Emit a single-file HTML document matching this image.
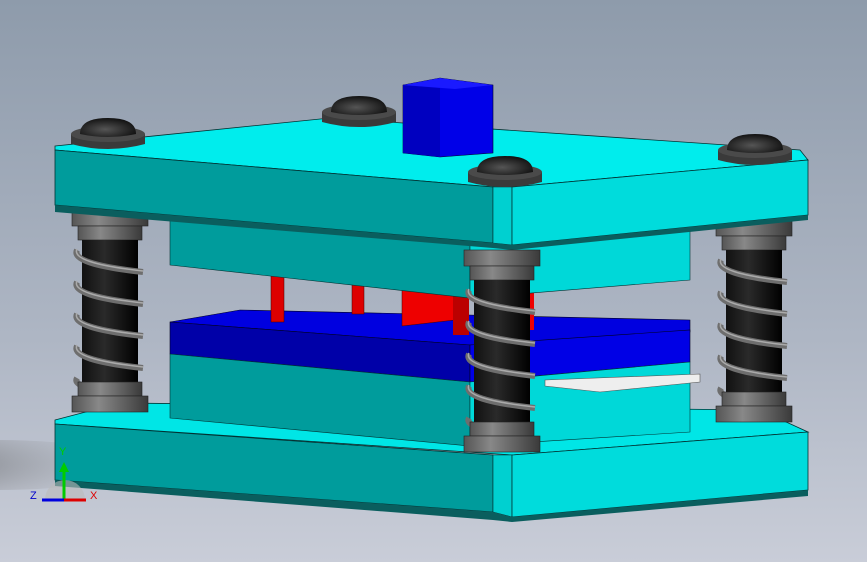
<!DOCTYPE html><html><head><style>body{margin:0;width:867px;height:562px;overflow:hidden;background:linear-gradient(#8e9bab,#aeb6c4 60%,#c9cdd8);}svg{display:block}</style></head><body>
<svg width="867" height="562" viewBox="0 0 867 562" xmlns="http://www.w3.org/2000/svg">
<defs>
<linearGradient id="cyl" x1="0" x2="1"><stop offset="0" stop-color="#111"/><stop offset="0.4" stop-color="#2a2a2a"/><stop offset="1" stop-color="#000"/></linearGradient>
<linearGradient id="ring" x1="0" x2="1"><stop offset="0" stop-color="#555"/><stop offset="0.35" stop-color="#888"/><stop offset="1" stop-color="#3a3a3a"/></linearGradient>
<radialGradient id="dome" cx="0.45" cy="0.6" r="0.6"><stop offset="0" stop-color="#555"/><stop offset="1" stop-color="#111"/></radialGradient>
<radialGradient id="shadow" cx="0" cy="0.5" r="1"><stop offset="0" stop-color="#333" stop-opacity=".7"/><stop offset="1" stop-color="#888" stop-opacity="0"/></radialGradient>
<g id="pillar">
<rect x="-38" y="0" width="76" height="16" fill="url(#ring)" stroke="#222" stroke-width=".6"/>
<rect x="-32" y="16" width="64" height="14" fill="url(#ring)" stroke="#222" stroke-width=".6"/>
<rect x="-28" y="30" width="56" height="160" fill="url(#cyl)"/>
<g fill="none" stroke="#6e6e6e" stroke-width="6">
<path d="M-33 40 Q-40 54 33 62 M-33 72 Q-40 86 33 94 M-33 104 Q-40 118 33 126 M-33 136 Q-40 150 33 158 M-33 168 Q-40 180 30 186"/>
</g>
<g fill="none" stroke="#aaa" stroke-width="1.5">
<path d="M-33 39 Q-40 53 33 61 M-33 71 Q-40 85 33 93 M-33 103 Q-40 117 33 125 M-33 135 Q-40 149 33 157"/>
</g>
<rect x="-32" y="172" width="64" height="14" fill="url(#ring)" stroke="#222" stroke-width=".6"/>
<rect x="-38" y="186" width="76" height="16" fill="url(#ring)" stroke="#222" stroke-width=".6"/>
</g>
<g id="cap">
<path d="M-37 0 L-37 10 Q0 20 37 10 L37 0 Z" fill="#3a3a3a"/>
<ellipse cx="0" cy="0" rx="37" ry="8" fill="#4a4a4a"/>
<path d="M-28 0 Q-28 -16 0 -16 Q28 -16 28 0 Q0 6 -28 0 Z" fill="url(#dome)"/>
</g>
</defs>
<ellipse cx="0" cy="465" rx="130" ry="25" fill="url(#shadow)"/>
<!-- bottom plate -->
<polygon points="55,420 120,403 760,410 808,432 512,455 55,424" fill="#00e6e6" stroke="#033" stroke-width=".8"/>
<polygon points="55,424 493,455 493,512 55,480" fill="#009c9c" stroke="#033" stroke-width=".8"/>
<polygon points="493,455 512,455 512,517 493,512" fill="#00d0d0" stroke="#033" stroke-width=".6"/>
<polygon points="512,455 808,432 808,490 512,517" fill="#00dcdc" stroke="#033" stroke-width=".8"/>
<polygon points="55,480 493,512 512,517 808,490 808,496 512,522 493,520 55,486" fill="#0a5e5e"/>
<!-- back pillars -->
<use href="#pillar" x="110" y="210"/>
<use href="#pillar" x="754" y="220"/>
<!-- lower die -->
<polygon points="170,322 240,310 690,320 690,332 470,345 170,322" fill="#0000e0" stroke="#002" stroke-width=".6"/>
<polygon points="170,322 470,345 470,382 170,354" fill="#0000a8" stroke="#002" stroke-width=".6"/>
<polygon points="470,345 690,330 690,362 470,382" fill="#0000e6" stroke="#002" stroke-width=".6"/>
<polygon points="170,354 470,382 470,446 170,418" fill="#009c9c" stroke="#033" stroke-width=".6"/>
<polygon points="470,382 690,362 690,432 470,446" fill="#00d8d8" stroke="#033" stroke-width=".6"/>
<polygon points="545,380 700,374 700,382 600,392 545,386" fill="#eee" stroke="#555" stroke-width=".6"/>
<!-- red punches -->
<rect x="271" y="270" width="13" height="52" fill="#d00" stroke="#400" stroke-width=".5"/>
<rect x="352" y="280" width="12" height="34" fill="#d00" stroke="#400" stroke-width=".5"/>
<polygon points="402,283 455,290 455,320 402,326" fill="#e00" stroke="#400" stroke-width=".5"/>
<rect x="453" y="295" width="16" height="40" fill="#b00"/>
<rect x="520" y="290" width="14" height="40" fill="#e00"/>
<!-- upper die -->
<polygon points="170,215 470,244 470,298 170,265" fill="#009c9c" stroke="#033" stroke-width=".6"/>
<polygon points="470,244 690,228 690,280 470,298" fill="#00d8d8" stroke="#033" stroke-width=".6"/>
<!-- top plate -->
<polygon points="55,146 330,118 800,150 808,160 512,187 493,187 55,150" fill="#00eded" stroke="#033" stroke-width=".8"/>
<polygon points="55,150 493,187 493,243 55,205" fill="#009c9c" stroke="#033" stroke-width=".8"/>
<polygon points="493,187 512,187 512,245 493,243" fill="#00d0d0" stroke="#033" stroke-width=".6"/>
<polygon points="512,187 808,160 808,215 512,245" fill="#00dcdc" stroke="#033" stroke-width=".8"/>
<polygon points="55,205 493,243 512,245 808,215 808,220 512,250 493,248 55,212" fill="#0a5e5e"/>
<!-- shank -->
<polygon points="403,85 440,78 493,85 493,153 440,157 403,153" fill="#0000e8" stroke="#002" stroke-width=".6"/>
<polygon points="403,85 440,88 440,157 403,153" fill="#0000c0"/>
<polygon points="403,85 440,78 493,85 455,89" fill="#1a1aff"/>
<!-- caps -->
<use href="#cap" x="108" y="134"/>
<use href="#cap" x="359" y="112"/>
<use href="#cap" x="755" y="150"/>
<use href="#cap" x="505" y="172"/>
<!-- front pillar -->
<use href="#pillar" x="502" y="250"/>
<!-- axis -->
<g font-family="Liberation Sans,sans-serif" font-size="11">
<path d="M45 500 A20 20 0 0 1 85 500" fill="#bbb" opacity=".6"/>
<line x1="64" y1="500" x2="64" y2="470" stroke="#0c0" stroke-width="3"/><polygon points="59,472 69,472 64,462" fill="#0c0"/>
<line x1="64" y1="500" x2="86" y2="500" stroke="#d00" stroke-width="3"/>
<line x1="64" y1="500" x2="42" y2="500" stroke="#00d" stroke-width="3"/>
<text x="59" y="455" fill="#0c0">Y</text><text x="90" y="499" fill="#d00">X</text><text x="30" y="499" fill="#00c">Z</text>
</g>
</svg></body></html>
